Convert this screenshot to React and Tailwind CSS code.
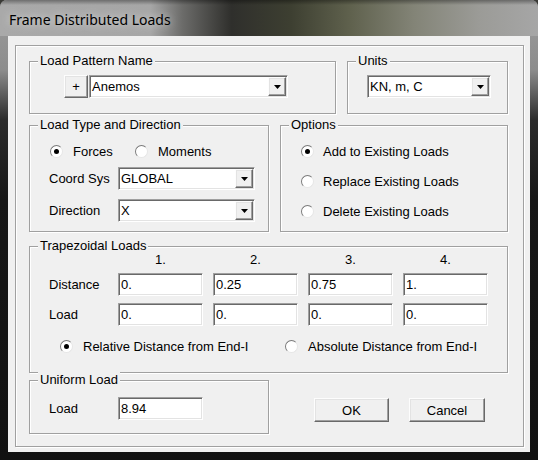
import React from "react";

// bordures 3D façon Windows classique
const sunken =
  "border border-t-[#a0a0a0] border-l-[#a0a0a0] border-b-white border-r-white shadow-[inset_1px_1px_0_#696969,inset_-1px_-1px_0_#e3e3e3]";
const raised =
  "border border-t-[#fdfdfd] border-l-[#fdfdfd] border-b-[#696969] border-r-[#696969] shadow-[inset_-1px_-1px_0_#a0a0a0,inset_1px_1px_0_#e3e3e3]";

const Group = ({ label, className = "", children }) => (
  <div
    className={`relative border border-[#a0a0a0] shadow-[inset_1px_1px_0_#fff,1px_1px_0_#fff] ${className}`}
  >
    <span className="absolute -top-[9px] left-[8px] bg-[#f0f0f0] px-[2px] leading-[15px] whitespace-nowrap">
      {label}
    </span>
    {children}
  </div>
);

const Radio = ({ checked, label, gap = "ml-[10px]", className = "" }) => (
  <div className={`flex items-center h-[16px] ${className}`}>
    <span className="flex items-center justify-center w-[13px] h-[13px] rounded-full bg-white border border-t-[#7a7a7a] border-l-[#7a7a7a] border-b-[#e6e6e6] border-r-[#e6e6e6]">
      {checked && <span className="w-[5px] h-[5px] rounded-full bg-black" />}
    </span>
    <span className={`${gap} whitespace-nowrap leading-[15px]`}>{label}</span>
  </div>
);

const Field = ({ value, className = "" }) => (
  <div className={`flex items-center bg-white pl-[2px] ${sunken} ${className}`}>
    <span className="leading-[15px] whitespace-nowrap">{value}</span>
  </div>
);

const Combo = ({ value, className = "" }) => (
  <div className={`flex bg-white p-[1px] ${sunken} ${className}`}>
    <span className="flex-1 flex items-center pl-[1px] leading-[15px] whitespace-nowrap">
      {value}
    </span>
    <span
      className={`w-[18px] flex items-center justify-center bg-[#f0f0f0] ${raised}`}
    >
      <svg width="7" height="4" viewBox="0 0 7 4">
        <path d="M0 0h7L3.5 4z" fill="#000" />
      </svg>
    </span>
  </div>
);

const Button = ({ children, className = "" }) => (
  <div
    className={`flex items-center justify-center bg-[#f0f0f0] leading-[15px] ${raised} ${className}`}
  >
    {children}
  </div>
);

export default function App() {
  return (
    <div className="w-[538px] h-[460px] bg-[#3a3a36] overflow-hidden">
      <div className="w-[538px] h-[460px] rounded-t-[7px] overflow-hidden flex flex-col bg-[linear-gradient(180deg,#9d9d9d_0px,#8c8c8c_70px,#2b2b2b_120px,#171717_200px,#111_100%)]">
        {/* Barre de titre */}
        <div className="h-[36px] shrink-0 flex items-center pl-[9px] pt-[2px] bg-[linear-gradient(180deg,rgba(0,0,0,0.35)_0px,rgba(0,0,0,0)_5px),linear-gradient(90deg,#a9a9a9_0%,#a6a6a6_28%,#6b6b69_34%,#2f2f2c_43%,#3d3f31_54%,#5f614d_65%,#838477_77%,#9b9b97_89%,#a6a6a6_100%)]">
          <span className="font-['Noto_Sans',sans-serif] text-[14px] text-black [text-shadow:0_0_8px_rgba(255,255,255,0.8)]">
            Frame Distributed Loads
          </span>
        </div>

        {/* Zone client */}
        <div className="mx-[8px] w-[522px] h-[416px] bg-[#f0f0f0] pt-[9px] pl-[7px] font-['Liberation_Sans',Arial,sans-serif] text-[13px] text-black">
          <div className="w-[509px] h-[402px] border border-[#a0a0a0] shadow-[inset_1px_1px_0_#fff,1px_1px_0_#fff] pl-[13px] pt-[15px] flex flex-col">
            {/* Ligne 1 */}
            <div className="flex gap-[11px]">
              <Group label="Load Pattern Name" className="w-[307px] h-[53px]">
                <div className="flex gap-[1px] ml-[34px] mt-[13px]">
                  <Button className="w-[24px] h-[23px]">+</Button>
                  <Combo value="Anemos" className="w-[199px] h-[23px]" />
                </div>
              </Group>
              <Group label="Units" className="w-[161px] h-[53px]">
                <Combo value="KN, m, C" className="w-[124px] h-[23px] ml-[19px] mt-[13px]" />
              </Group>
            </div>

            {/* Ligne 2 */}
            <div className="flex gap-[11px] mt-[11px]">
              <Group label="Load Type and Direction" className="w-[240px] h-[107px]">
                <div className="flex ml-[20px] mt-[17px]">
                  <Radio checked label="Forces" className="w-[85px]" />
                  <Radio label="Moments" />
                </div>
                <div className="flex items-center ml-[19px] mt-[8px]">
                  <span className="w-[69px]">Coord Sys</span>
                  <Combo value="GLOBAL" className="w-[137px] h-[23px]" />
                </div>
                <div className="flex items-center ml-[19px] mt-[9px]">
                  <span className="w-[69px]">Direction</span>
                  <Combo value="X" className="w-[137px] h-[23px]" />
                </div>
              </Group>
              <Group label="Options" className="w-[228px] h-[107px]">
                <div className="flex flex-col gap-[14px] ml-[20px] mt-[17px]">
                  <Radio checked label="Add to Existing Loads" gap="ml-[9px]" />
                  <Radio label="Replace Existing Loads" gap="ml-[9px]" />
                  <Radio label="Delete Existing Loads" gap="ml-[9px]" />
                </div>
              </Group>
            </div>

            {/* Ligne 3 */}
            <Group label="Trapezoidal Loads" className="w-[479px] h-[127px] mt-[14px]">
              <div className="flex ml-[88px] mt-[5px] gap-[10px] leading-[15px]">
                {["1.", "2.", "3.", "4."].map((h) => (
                  <span key={h} className="w-[85px] text-center">
                    {h}
                  </span>
                ))}
              </div>
              <div className="flex items-center ml-[19px] mt-[6px]">
                <span className="w-[69px]">Distance</span>
                <div className="flex gap-[10px]">
                  {["0.", "0.25", "0.75", "1."].map((v, i) => (
                    <Field key={i} value={v} className="w-[85px] h-[23px]" />
                  ))}
                </div>
              </div>
              <div className="flex items-center ml-[19px] mt-[7px]">
                <span className="w-[69px]">Load</span>
                <div className="flex gap-[10px]">
                  {["0.", "0.", "0.", "0."].map((v, i) => (
                    <Field key={i} value={v} className="w-[85px] h-[23px]" />
                  ))}
                </div>
              </div>
              <div className="flex ml-[30px] mt-[12px]">
                <Radio checked label="Relative Distance from End-I" className="w-[225px]" />
                <Radio label="Absolute Distance from End-I" />
              </div>
            </Group>

            {/* Ligne 4 */}
            <div className="flex mt-[7px]">
              <Group label="Uniform Load" className="w-[240px] h-[54px]">
                <div className="flex items-center ml-[19px] mt-[16px]">
                  <span className="w-[69px]">Load</span>
                  <Field value="8.94" className="w-[85px] h-[23px]" />
                </div>
              </Group>
              <div className="flex gap-[20px] ml-[45px] mt-[18px]">
                <Button className="w-[75px] h-[24px]">OK</Button>
                <Button className="w-[76px] h-[24px]">Cancel</Button>
              </div>
            </div>
          </div>
        </div>
      </div>
    </div>
  );
}
